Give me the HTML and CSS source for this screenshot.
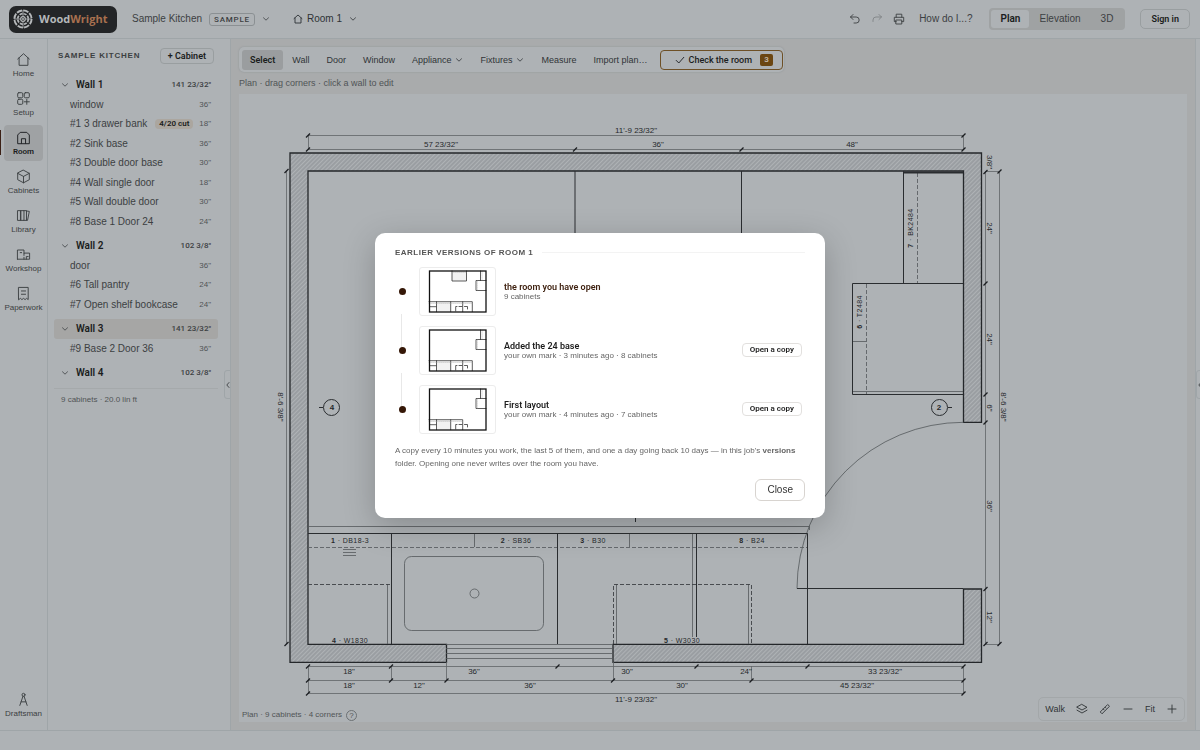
FILE: index.html
```html
<!DOCTYPE html>
<html lang="en">
<head>
<meta charset="utf-8">
<title>WoodWright – Room 1</title>
<link rel="stylesheet" href="styles.css">
</head>
<body>
<svg class="defs" aria-hidden="true">
  <symbol id="chev" viewBox="0 0 8 8"><path d="M1.500 2.800 4 5.200 6.500 2.800"/></symbol>
</svg>
<div class="app">
  <header class="topbar">
    <a class="logo" href="#">
      <svg class="logo-mark" viewBox="0 0 20 20" aria-hidden="true">
        <circle cx="10" cy="10" r="8.600" stroke-width="1.900" stroke-dasharray="5.550 1.200"/>
        <circle cx="10" cy="10" r="5.300" stroke-width="1.700" stroke-dasharray="3.060 1.100"/>
        <circle cx="10" cy="10" r="2.300" stroke-width="1.200"/>
        <circle class="logo-hub" cx="10" cy="10" r="1"/>
        <path stroke-width=".8" d="M10 1v6.500M10 12.500V19M1 10h6.500M12.500 10H19"/>
      </svg>
      <span>Wood<span class="logo-accent">Wright</span></span>
    </a>
    <button class="crumb job">Sample Kitchen <span class="tag">SAMPLE</span><svg class="chev"><use href="#chev"/></svg></button>
    <button class="crumb room"><svg class="ic10" viewBox="0 0 10 10"><path d="M1 4.600 5 1l4 3.600M2 3.900V9h6V3.900"/></svg>Room 1<svg class="chev"><use href="#chev"/></svg></button>
    <div class="top-right">
      <button class="icon-btn" aria-label="Undo"><svg class="ic12" viewBox="0 0 12 12"><path d="M4 1.500 1.500 4 4 6.500M1.500 4h5.700a3 3 0 0 1 0 6H5"/></svg></button>
      <button class="icon-btn faint" aria-label="Redo"><svg class="ic12" viewBox="0 0 12 12"><path d="M8 1.500 10.500 4 8 6.500M10.500 4H5a3 3 0 0 0-3 3v1.500"/></svg></button>
      <button class="icon-btn" aria-label="Print"><svg class="ic12" viewBox="0 0 12 12"><path d="M3.200 4.200V1.200h5.600v3M3.200 8.600H1.300V4.300h9.400v4.300H8.800M3.200 7h5.600v4H3.200z"/></svg></button>
      <button class="help">How do I...?</button>
      <div class="seg"><button class="on">Plan</button><button>Elevation</button><button>3D</button></div>
      <button class="signin">Sign in</button>
    </div>
  </header>

  <div class="body">
    <nav class="rail">
      <a href="#"><svg viewBox="0 0 16 16"><path d="M1.800 7.500 8 1.800l6.200 5.700M3.300 6.200V14.200h9.400V6.200"/></svg>Home</a>
      <a href="#"><svg viewBox="0 0 16 16"><rect x="1.800" y="1.800" width="5.400" height="5.400" rx="1.200"/><rect x="8.800" y="1.800" width="5.400" height="5.400" rx="1.200"/><rect x="1.800" y="8.800" width="5.400" height="5.400" rx="1.200"/><path d="M11.500 8.800v5.400M8.800 11.500h5.400"/></svg>Setup</a>
      <a href="#" class="on"><svg viewBox="0 0 16 16"><path d="M1.800 14.200V5.300L4.500 2.500h7l2.700 2.800v8.900zM5.800 14.200V9.300h4.400v4.900"/></svg>Room</a>
      <a href="#"><svg viewBox="0 0 16 16"><path d="M8 1.300l6.200 3.300v6.800L8 14.700l-6.200-3.300V4.600zM1.800 4.600 8 7.900l6.200-3.300M8 7.900v6.800"/></svg>Cabinets</a>
      <a href="#"><svg viewBox="0 0 16 16"><path d="M2 2.800h3.200v10.400H2zM5.200 2.800h3.300v10.400H5.200zM8.500 2.800h2.700v10.400H8.500M11.200 3.200l3 .4L12.300 13.200h-1.100"/></svg>Library</a>
      <a href="#"><svg viewBox="0 0 16 16"><path d="M1.500 13V3.200h7V6.500M1.500 13h13V6.500h-6V9M4.500 6H6M11 13v-2.800h2M8.500 11V13"/></svg>Workshop</a>
      <a href="#"><svg viewBox="0 0 16 16"><path d="M3 1.500h10v13l-1.700-1.300-1.600 1.300L8 13.200l-1.700 1.300-1.600-1.300L3 14.500zM5.800 5.300h4.400M5.800 8.800h4.400"/></svg>Paperwork</a>
      <a href="#" class="last"><svg viewBox="0 0 16 16"><circle cx="8" cy="3" r="1.600"/><path d="M7.400 4.600 4.100 14.300M8.600 4.600l3.300 9.700M5.500 10.500h5"/></svg>Draftsman</a>
    </nav>

    <aside class="side">
      <div class="side-head"><h2>SAMPLE KITCHEN</h2><button class="add">+ Cabinet</button></div>
      <div class="walls">
        <section>
          <button class="wall"><svg class="chev"><use href="#chev"/></svg>Wall 1<span>141 23/32"</span></button>
          <ul>
            <li>window<span>36"</span></li>
            <li>#1 3 drawer bank<em>4/20 cut</em><span>18"</span></li>
            <li>#2 Sink base<span>36"</span></li>
            <li>#3 Double door base<span>30"</span></li>
            <li>#4 Wall single door<span>18"</span></li>
            <li>#5 Wall double door<span>30"</span></li>
            <li>#8 Base 1 Door 24<span>24"</span></li>
          </ul>
        </section>
        <section>
          <button class="wall"><svg class="chev"><use href="#chev"/></svg>Wall 2<span>102 3/8"</span></button>
          <ul>
            <li>door<span>36"</span></li>
            <li>#6 Tall pantry<span>24"</span></li>
            <li>#7 Open shelf bookcase<span>24"</span></li>
          </ul>
        </section>
        <section>
          <button class="wall on"><svg class="chev"><use href="#chev"/></svg>Wall 3<span>141 23/32"</span></button>
          <ul><li>#9 Base 2 Door 36<span>36"</span></li></ul>
        </section>
        <section>
          <button class="wall"><svg class="chev"><use href="#chev"/></svg>Wall 4<span>102 3/8"</span></button>
        </section>
      </div>
      <p class="side-foot">9 cabinets · 20.0 lin ft</p>
      <button class="handle" aria-label="Collapse panel"><svg viewBox="0 0 6 8"><path d="M4 1.500 1.800 4 4 6.500"/></svg></button>
    </aside>

    <main class="main">
      <div class="tools">
        <button class="on">Select</button><button>Wall</button><button>Door</button><button>Window</button><button>Appliance<svg class="chev"><use href="#chev"/></svg></button><button>Fixtures<svg class="chev"><use href="#chev"/></svg></button><button>Measure</button><button>Import plan…</button>
        <button class="check"><svg class="ic10" viewBox="0 0 10 10"><path d="M1.200 5.400 3.800 8 8.800 2.300"/></svg>Check the room<b>3</b></button>
      </div>
      <p class="hint">Plan · drag corners · click a wall to edit</p>
      <div class="canvas">
        <svg class="plan" viewBox="239 94 948 628" role="img" aria-label="Floor plan of Room 1">
          <defs>
            <pattern id="hatch" width="3" height="3" patternUnits="userSpaceOnUse" patternTransform="rotate(45)"><path class="hatch-line" d="M1 0V3"/></pattern>
            <marker id="tick" markerUnits="userSpaceOnUse" markerWidth="6" markerHeight="6" refX="3" refY="3"><path class="tick" d="M1 5 5 1"/></marker>
          </defs>
          <g class="wallfill">
            <path d="M290 153H981.500V422.300H963.500V171H308V644.300H446.500V662.300H290Z"/>
            <path d="M613 644.300H963.500V589H981.500V662.300H613Z"/>
          </g>
          <g class="thin">
            <path d="M446 644.500H613M446 648.500H613M446 653.500H613M446 658.500H613"/>
            <path d="M308 526.500H809.500V530M387.500 584V644M474.500 533V547M629.500 533V547M692.500 533V637M616.500 584V644M748.500 584V644"/>
            <path d="M852 341.500H866M852 391.500H963"/>
            <path d="M343 549.500H356M343 552.500H356M343 555.500H356"/>
            <rect x="404.500" y="556.500" width="139" height="74" rx="7"/>
            <circle cx="474.500" cy="593.500" r="4.500"/>
            <path d="M963.500 422.300A166.500 166.500 0 0 0 797 588.500"/>
          </g>
          <g class="dash">
            <path d="M308 547.500H807M917.500 173V283M866.500 284V394"/>
            <path class="strong" d="M308 584.500H391M613.500 644V584.500H751.500V644"/>
          </g>
          <g class="solid">
            <path d="M575 171V283H741.500V171M308 533.500H807.500V644M391.500 533V644M557.500 533V644M696.500 533V637M903.500 171V283.500M852.500 394.500V283.500H963M852.500 394.500H963M797 588.500H963M635.500 512V522"/>
            <path class="thick" d="M903 172.500H963"/>
            <circle cx="331.500" cy="407.500" r="8"/><path d="M319 407.500H323"/>
            <circle cx="939.500" cy="407.500" r="8"/><path d="M948 407.500H952"/>
          </g>
          <g class="dims">
            <path d="M308.500 135V149M963.500 135V149M308.500 666V694M391.500 666V680M446.500 662V680M613.500 662V680M751.500 666V680M963.500 666V694M985 171.500H999M985 644.500H999"/>
            <path class="t" d="M308 135.500H963.500"/>
            <path class="t" d="M308 149.500H575H741.500H963.500"/>
            <path class="t" d="M286.500 171V644"/>
            <path class="t" d="M985.500 172V283.500V394.500V422.500V589V644"/>
            <path class="t" d="M999.500 171.500V644"/>
            <path class="t" d="M308 666.500H391H557.500H696.500H807.500H963.500"/>
            <path class="t" d="M308 680.500H391H446.500H613H751.500H963.500"/>
            <path class="t" d="M308 693.500H963.500"/>
          </g>
          <g class="dimtext">
            <text x="636" y="133">11'-9 23/32"</text>
            <text x="441" y="147">57 23/32"</text><text x="658" y="147">36"</text><text x="852" y="147">48"</text>
            <text x="349" y="674">18"</text><text x="474" y="674">36"</text><text x="627" y="674">30"</text><text x="746" y="674">24"</text><text x="885" y="674">33 23/32"</text>
            <text x="349" y="688">18"</text><text x="419" y="688">12"</text><text x="530" y="688">36"</text><text x="682" y="688">30"</text><text x="857" y="688">45 23/32"</text>
            <text x="636" y="702">11'-9 23/32"</text>
            <text transform="translate(278 407) rotate(90)">8'-6 3/8"</text>
            <text transform="translate(1001 407) rotate(90)">8'-6 3/8"</text>
            <text transform="translate(987 162) rotate(90)">3/8"</text>
            <text transform="translate(987 228) rotate(90)">24"</text>
            <text transform="translate(987 339) rotate(90)">24"</text>
            <text transform="translate(987 408) rotate(90)">6"</text>
            <text transform="translate(987 506) rotate(90)">36"</text>
            <text transform="translate(987 617) rotate(90)">12"</text>
          </g>
          <g class="cabtext">
            <text x="350" y="543"><tspan class="n">1</tspan> · DB18-3</text>
            <text x="516" y="543"><tspan class="n">2</tspan> · SB36</text>
            <text x="593" y="543"><tspan class="n">3</tspan> · B30</text>
            <text x="752" y="543"><tspan class="n">8</tspan> · B24</text>
            <text x="350" y="643"><tspan class="n">4</tspan> · W1830</text>
            <text x="682" y="643"><tspan class="n">5</tspan> · W3030</text>
            <text transform="translate(913 228) rotate(-90)"><tspan class="n">7</tspan> · BK2484</text>
            <text transform="translate(862 312) rotate(-90)"><tspan class="n">6</tspan> · T2484</text>
            <text class="n" x="332" y="410">4</text><text class="n" x="939" y="410">2</text>
          </g>
        </svg>
        <div class="status">Plan · 9 cabinets · 4 corners <button aria-label="Help">?</button></div>
        <div class="zoombar">
          <button>Walk</button>
          <button aria-label="Layers"><svg class="ic12" viewBox="0 0 12 12"><path d="M6 1.500 11 4.300 6 7 1 4.300zM1 7.200 6 10l5-2.800"/></svg></button>
          <button aria-label="Measure"><svg class="ic12" viewBox="0 0 12 12"><path d="M1.500 8.700 8.700 1.500 10.500 3.300 3.300 10.500zM4.200 6l.9.900M6 4.200l.9.900"/></svg></button>
          <button aria-label="Zoom out"><svg class="ic12" viewBox="0 0 12 12"><path d="M2 6h8"/></svg></button>
          <button>Fit</button>
          <button aria-label="Zoom in"><svg class="ic12" viewBox="0 0 12 12"><path d="M2 6h8M6 2v8"/></svg></button>
        </div>
      </div>
    </main>
    <aside class="right-edge"><button class="handle" aria-label="Expand panel"><svg viewBox="0 0 6 8"><path d="M4 1.500 1.800 4 4 6.500"/></svg></button></aside>
  </div>
  <footer class="foot"></footer>
</div>

<div class="overlay">
  <dialog open class="dialog" aria-labelledby="dlg-title">
    <h1 id="dlg-title">EARLIER VERSIONS OF ROOM 1</h1>
    <ol class="versions">
      <li class="current">
        <svg class="thumb" viewBox="1 1 75 47" aria-hidden="true">
          <path class="sink" d="M17.500 35H31.500V44.500H17.500ZM33 4H47.500V14H33Z"/>
          <path class="cab" d="M33 4V14H47.500V4M61.500 4V13.500M67 13.500H57V23.500H67M10 34.700H53.300V44.700M17.500 34.700V44.700M31.700 34.700V44.700M43.700 34.700V44.700M11 39.700H17M36.700 44V39.500H38M40 39.500H43M45.500 39.500H48.500V42"/>
          <path class="cab-dash" d="M34 5.500H47M63 4V13M58.500 14V23M10 36.500H53"/>
          <rect class="outline" x="10.500" y="4" width="56.500" height="41"/>
        </svg>
        <div class="info"><strong>the room you have open</strong><span>9 cabinets</span></div>
      </li>
      <li>
        <svg class="thumb" viewBox="1 1 75 47" aria-hidden="true">
          <path class="sink" d="M17.500 35H31.500V44.500H17.500Z"/>
          <path class="cab" d="M61.500 4V13.500M67 13.500H57V23.500H67M10 34.700H53.300V44.700M17.500 34.700V44.700M31.700 34.700V44.700M43.700 34.700V44.700M11 39.700H17M36.700 44V39.500H38M40 39.500H43M45.500 39.500H48.500V42"/>
          <path class="cab-dash" d="M63 4V13M58.500 14V23M10 36.500H53"/>
          <rect class="outline" x="10.500" y="4" width="56.500" height="41"/>
        </svg>
        <div class="info"><strong>Added the 24 base</strong><span>your own mark · 3 minutes ago · 8 cabinets</span></div>
        <button class="open">Open a copy</button>
      </li>
      <li>
        <svg class="thumb" viewBox="1 1 75 47" aria-hidden="true">
          <path class="sink" d="M17.500 35H31.500V44.500H17.500Z"/>
          <path class="cab" d="M61.500 4V13.500M67 13.500H57V23.500H67M10 34.700H43.700V44.700M17.500 34.700V44.700M31.700 34.700V44.700M11 39.700H17M36.700 44V39.500H38M40 39.500H43M45.500 39.500H48.500V42"/>
          <path class="cab-dash" d="M63 4V13M58.500 14V23M10 36.500H43"/>
          <rect class="outline" x="10.500" y="4" width="56.500" height="41"/>
        </svg>
        <div class="info"><strong>First layout</strong><span>your own mark · 4 minutes ago · 7 cabinets</span></div>
        <button class="open">Open a copy</button>
      </li>
    </ol>
    <p class="note">A copy every 10 minutes you work, the last 5 of them, and one a day going back 10 days — in this job's <b>versions</b> folder. Opening one never writes over the room you have.</p>
    <div class="actions"><button class="close">Close</button></div>
  </dialog>
</div>
</body>
</html>
```
FILE: styles.css
```css
:root {
  --panel: #aeb2b5;
  --page: #a9abac;
  --line: #9fa5a8;
  --ink: #1b1d20;
  --text: #3c4042;
  --muted: #505456;
  --sans: "Liberation Sans", Arial, sans-serif;
  --medium: Roboto, "Liberation Sans", sans-serif;
}
* { box-sizing: border-box; }
body { margin: 0; font: 10px/12px var(--sans); color: var(--text); background: var(--panel); }
button { font: inherit; color: inherit; background: none; border: 0; padding: 0; margin: 0; }
a { color: inherit; text-decoration: none; }
h1, h2, p, ul, ol { margin: 0; padding: 0; }
ul, ol { list-style: none; }
svg { fill: none; stroke: currentColor; stroke-width: .9; stroke-linejoin: round; stroke-linecap: round; }
.defs { position: absolute; width: 0; height: 0; }
.chev { width: 8px; height: 8px; stroke-width: .8; }
.ic10 { width: 10px; height: 10px; }
.ic12 { width: 12px; height: 12px; display: block; }

.app { height: 100vh; display: flex; flex-direction: column; }
.topbar { flex: none; height: 39px; display: flex; align-items: center; padding: 0 10px 0 9px; border-bottom: 1px solid var(--line); }
.logo { display: flex; align-items: center; gap: 6px; height: 27px; width: 108px; padding-left: 4px; border-radius: 7px; background: #232527; color: #b5b8ba; font: 700 11px/14px "Open Sans", sans-serif; }
.logo-mark { width: 20px; height: 20px; stroke-linecap: butt; }
.logo-hub { fill: currentColor; stroke: none; }
.logo-accent { color: #a8704f; }
.crumb { display: flex; align-items: center; }
.job { margin-left: 15px; gap: 7px; }
.tag { border: 1px solid #8b9093; border-radius: 3px; padding: 0 4px; font: 500 8px/11px var(--medium); letter-spacing: .1em; }
.room { margin-left: 23px; gap: 4px; color: #2e3235; }
.room .chev { margin-left: 3px; }
.top-right { margin-left: auto; display: flex; align-items: center; }
.icon-btn { margin-right: 10px; }
.faint { opacity: .4; }
.help { margin: 0 17px 0 4px; }
.seg { display: flex; height: 22px; padding: 2px; border-radius: 4px; background: #9fa2a3; margin-right: 15px; }
.seg button { padding: 0 10px; border-radius: 3px; }
.seg .on { background: var(--panel); color: var(--ink); font: 600 10px/12px var(--medium); padding: 0 9px; }
.signin { height: 20px; padding: 0 10px; border: 1px solid #999ea0; border-radius: 5px; color: var(--ink); font: 600 9px/12px var(--medium); }

.body { flex: 1; min-height: 0; display: flex; }
.rail { flex: none; width: 48px; border-right: 1px solid var(--line); display: flex; flex-direction: column; gap: 3px; padding: 8px 4px 7px; font-size: 8px; line-height: 9px; }
.rail a { position: relative; height: 36px; display: flex; flex-direction: column; align-items: center; justify-content: center; gap: 2px; border-radius: 4px; }
.rail svg { width: 15px; height: 15px; stroke-width: 1; }
.rail .on { background: #9fa2a4; color: var(--ink); font-family: var(--medium); font-weight: 600; }
.rail .on::before { content: ""; position: absolute; left: -4px; top: 5px; width: 1px; height: 25px; background: #3b2015; }
.rail .last { margin-top: auto; }

.side { position: relative; flex: none; width: 183px; border-right: 1px solid var(--line); padding: 8px 12px 0 6px; }
.side-head { display: flex; align-items: center; justify-content: space-between; padding: 0 4px; height: 18px; }
h2 { font: 700 8px/10px var(--sans); letter-spacing: .1em; }
.add { height: 16px; padding: 0 7px; border: 1px solid #999ea0; border-radius: 4px; color: var(--ink); font: 600 9px/12px var(--medium); }
.walls { display: flex; flex-direction: column; gap: 5px; padding-top: 10px; }
.walls section { display: grid; }
.wall { display: flex; align-items: center; height: 20px; padding: 0 7px; border-radius: 3px; color: var(--ink); font: 600 10px/12px var(--medium); }
.wall .chev { margin-right: 7px; color: var(--text); }
.wall span { margin-left: auto; font: 500 8px/12px var(--medium); color: var(--text); }
.wall.on { background: #a6a6a5; }
.walls ul { display: grid; grid-auto-rows: 19px 20px; }
.walls li { display: flex; align-items: center; padding: 0 7px 0 16px; }
.walls li span { margin-left: auto; font-size: 8px; color: var(--muted); }
.walls em { margin-left: 8px; padding: 0 4px; border-radius: 4px; background: #aba69f; color: var(--ink); font: 600 8px/10px var(--medium); }
.side-foot { margin-top: 5px; padding: 5px 7px; border-top: 1px solid #a5a9ab; font-size: 8px; color: var(--muted); }
.handle { position: absolute; left: 176px; top: 331px; width: 7px; height: 29px; border: 1px solid var(--line); border-radius: 3px 0 0 3px; background: var(--panel); display: grid; place-items: center; }
.handle svg { width: 6px; height: 8px; }

.main { flex: 1; min-width: 0; background: var(--page); padding: 8px; display: flex; flex-direction: column; }
.tools { align-self: flex-start; display: flex; align-items: center; gap: 1px; height: 25px; padding: 0 1px 0 3px; border-radius: 5px; background: var(--panel); box-shadow: 0 0 2px #8f9496; font-size: 9px; color: #303437; }
.tools button { height: 20px; padding: 0 8px; display: flex; align-items: center; gap: 4px; border-radius: 3px; }
.tools .on { background: #9a9d9f; color: var(--ink); font-family: var(--medium); font-weight: 600; }
.tools .check { margin-left: 3px; padding: 0 9px 0 14px; border: 1px solid #6e5026; border-radius: 4px; color: var(--ink); font-family: var(--medium); font-weight: 500; }
.check b { width: 13px; height: 12px; margin-left: 4px; border-radius: 2px; background: #6b4612; color: #c0b5a5; font-size: 8px; font-weight: 700; }
.hint { height: 22px; font-size: 9px; line-height: 22px; color: var(--muted); }
.canvas { position: relative; flex: 1; min-height: 0; background: var(--panel); }
.plan { display: block; width: 100%; height: 100%; stroke-linejoin: miter; stroke-linecap: butt; }
.hatch-line { stroke: #74797c; stroke-width: .7; }
.tick { stroke: var(--ink); stroke-width: 1.2; }
.wallfill path { fill: url(#hatch); stroke: #24272a; stroke-width: 1.3; }
.thin { stroke: #54595c; stroke-width: .8; }
.dash { stroke: #5c6164; stroke-width: .9; stroke-dasharray: 4 2; }
.dash .strong { stroke: #3d4144; }
.solid { stroke: #2a2d30; stroke-width: 1; }
.solid .thick { stroke-width: 2; }
.dims { stroke: #5f6467; stroke-width: .8; }
.dims .t { marker: url(#tick); }
.dimtext, .cabtext { stroke: none; fill: #26292c; text-anchor: middle; }
.dimtext { font: 8px var(--sans); }
.cabtext { font: 7px var(--sans); letter-spacing: .06em; }
.cabtext .n { font-weight: 700; }
.cabtext text.n { font-size: 8px; letter-spacing: 0; }
.status { position: absolute; left: 3px; bottom: 1px; display: flex; align-items: center; gap: 4px; font-size: 8px; color: var(--muted); }
.status button { width: 11px; height: 11px; border: 1px solid #6c7174; border-radius: 50%; line-height: 9px; }
.zoombar { position: absolute; right: 2px; bottom: 1px; height: 24px; display: flex; align-items: center; gap: 11px; padding: 0 6px; border: 1px solid #a3a7a9; border-radius: 5px; font-size: 9px; color: #303437; }
.right-edge { position: relative; flex: none; width: 5px; border-left: 1px solid var(--line); }
.right-edge .handle { left: 0; }
.foot { flex: none; height: 20px; border-top: 1px solid var(--line); }

.overlay { position: fixed; inset: 0; display: grid; place-items: center; }
.dialog { position: static; width: 450px; margin: 0; padding: 15px 20px 17px; border: 0; border-radius: 10px; background: #fff; color: #666; box-shadow: 0 8px 32px rgba(0, 0, 0, .22); }
h1 { display: flex; align-items: center; gap: 9px; font: 700 8px/10px var(--sans); letter-spacing: .06em; color: #555; }
h1::after { content: ""; flex: 1; height: 1px; background: #f3f3f3; }
.versions { display: grid; gap: 10px; margin-top: 9px; }
.versions li { position: relative; display: flex; align-items: center; gap: 8px; padding: 0 3px 0 4px; }
.versions li::before { content: ""; width: 7px; height: 7px; margin-right: 5px; border-radius: 50%; background: #351707; z-index: 1; }
.versions li + li::after { content: ""; position: absolute; left: 6px; top: -12px; width: 1px; height: 34px; background: #e8e8e8; }
.thumb { width: 77px; height: 49px; border: 1px solid #ececec; border-radius: 3px; stroke-linejoin: miter; }
.outline { stroke: #111; stroke-width: 1.3; }
.cab { stroke: #333; stroke-width: .8; }
.cab-dash { stroke: #aaa; stroke-width: .4; stroke-dasharray: 1 1; }
.sink { fill: #f2f2f2; stroke: none; }
.info { flex: 1; display: flex; flex-direction: column; font-size: 8px; line-height: 9px; }
.info strong { font: 600 9px/10px var(--medium); color: #1d1d1d; }
.current strong { color: #402312; }
.open { height: 14px; padding: 0 7px; border: 1px solid #e2e0de; border-radius: 4px; color: #222; font: 600 8px/12px var(--medium); }
.note { margin-top: 10px; font-size: 8px; line-height: 13px; }
.actions { display: flex; justify-content: flex-end; margin-top: 9px; }
.close { height: 22px; padding: 0 11px; border: 1px solid #d8d4d0; border-radius: 6px; color: #333; font-size: 10px; }
```
